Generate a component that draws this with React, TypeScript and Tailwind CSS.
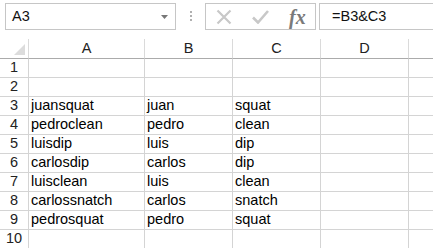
import { Fragment } from 'react';

const rows: [string, string, string][] = [
  ['', '', ''],
  ['', '', ''],
  ['juansquat', 'juan', 'squat'],
  ['pedroclean', 'pedro', 'clean'],
  ['luisdip', 'luis', 'dip'],
  ['carlosdip', 'carlos', 'dip'],
  ['luisclean', 'luis', 'clean'],
  ['carlossnatch', 'carlos', 'snatch'],
  ['pedrosquat', 'pedro', 'squat'],
  ['', '', ''],
];

const cols = ['A', 'B', 'C', 'D'];

export default function App() {
  return (
    <div className="h-[248px] w-[433px] overflow-hidden bg-white font-['Liberation_Sans',Arial,sans-serif] text-[14.5px] text-black">
      {/* formula bar */}
      <div className="flex h-[39px] items-start pt-[3px]">
        <div className="ml-[5px] flex h-[27px] w-[171px] items-center border border-[#c6c6c6] pl-[6px] pr-[7px]">
          <span className="flex-1 text-[#111]">A3</span>
          <svg width="7" height="4" viewBox="0 0 7 4">
            <path d="M0 0h7L3.5 4z" fill="#777" />
          </svg>
        </div>
        <div className="ml-[14px] mt-[8px] flex w-[3px] flex-col gap-[2px]">
          <span className="h-[2px] w-[2px] bg-[#b0b0b0]" />
          <span className="h-[2px] w-[2px] bg-[#b0b0b0]" />
          <span className="h-[2px] w-[2px] bg-[#b0b0b0]" />
        </div>
        <div className="ml-[12px] flex h-[27px] w-[111px] items-center border border-[#c6c6c6]">
          <svg className="ml-[10px]" width="16" height="16" viewBox="0 0 16 16">
            <path d="M1.5 1.5l13 13M14.5 1.5l-13 13" stroke="#c8c8c8" strokeWidth="2.2" />
          </svg>
          <svg className="ml-[20px]" width="17" height="15" viewBox="0 0 17 15">
            <path d="M1 8.5l5 5L16 2" stroke="#c8c8c8" strokeWidth="2.6" fill="none" />
          </svg>
          <span className="ml-[20px] font-['Liberation_Serif',serif] text-[20px] font-bold italic leading-none text-[#7a7a7a]">
            fx
          </span>
        </div>
        <div className="ml-[3px] flex h-[27px] flex-1 items-center border border-r-0 border-[#c6c6c6] pl-[12px] text-[#111]">
          =B3&amp;C3
        </div>
      </div>

      {/* sheet */}
      <div className="grid grid-cols-[29px_116px_88px_88px_88px_1fr]">
        <div className="relative h-[20px] border-r border-b border-r-[#dadada] border-b-[#ababab]">
          <svg className="absolute right-[3px] bottom-[3px]" width="11" height="11" viewBox="0 0 11 11">
            <path d="M11 0v11H0z" fill="#dcdcdc" />
          </svg>
        </div>
        {cols.map((c) => (
          <div
            key={c}
            className="flex h-[20px] items-center justify-center border-r border-b border-r-[#dadada] border-b-[#ababab] text-[#222]"
          >
            {c}
          </div>
        ))}
        <div className="h-[20px] border-b border-b-[#ababab]" />

        {rows.map((r, i) => (
          <Fragment key={i}>
            <div className="flex h-[19px] items-center justify-center border-r border-b border-[#d4d4d4] text-[#222]">
              {i + 1}
            </div>
            {r.map((v, j) => (
              <div key={j} className="flex h-[19px] items-center border-r border-b border-[#d4d4d4] pl-[2px]">
                {v}
              </div>
            ))}
            <div className="h-[19px] border-r border-b border-[#d4d4d4]" />
            <div className="h-[19px] border-b border-[#d4d4d4]" />
          </Fragment>
        ))}
      </div>
    </div>
  );
}
